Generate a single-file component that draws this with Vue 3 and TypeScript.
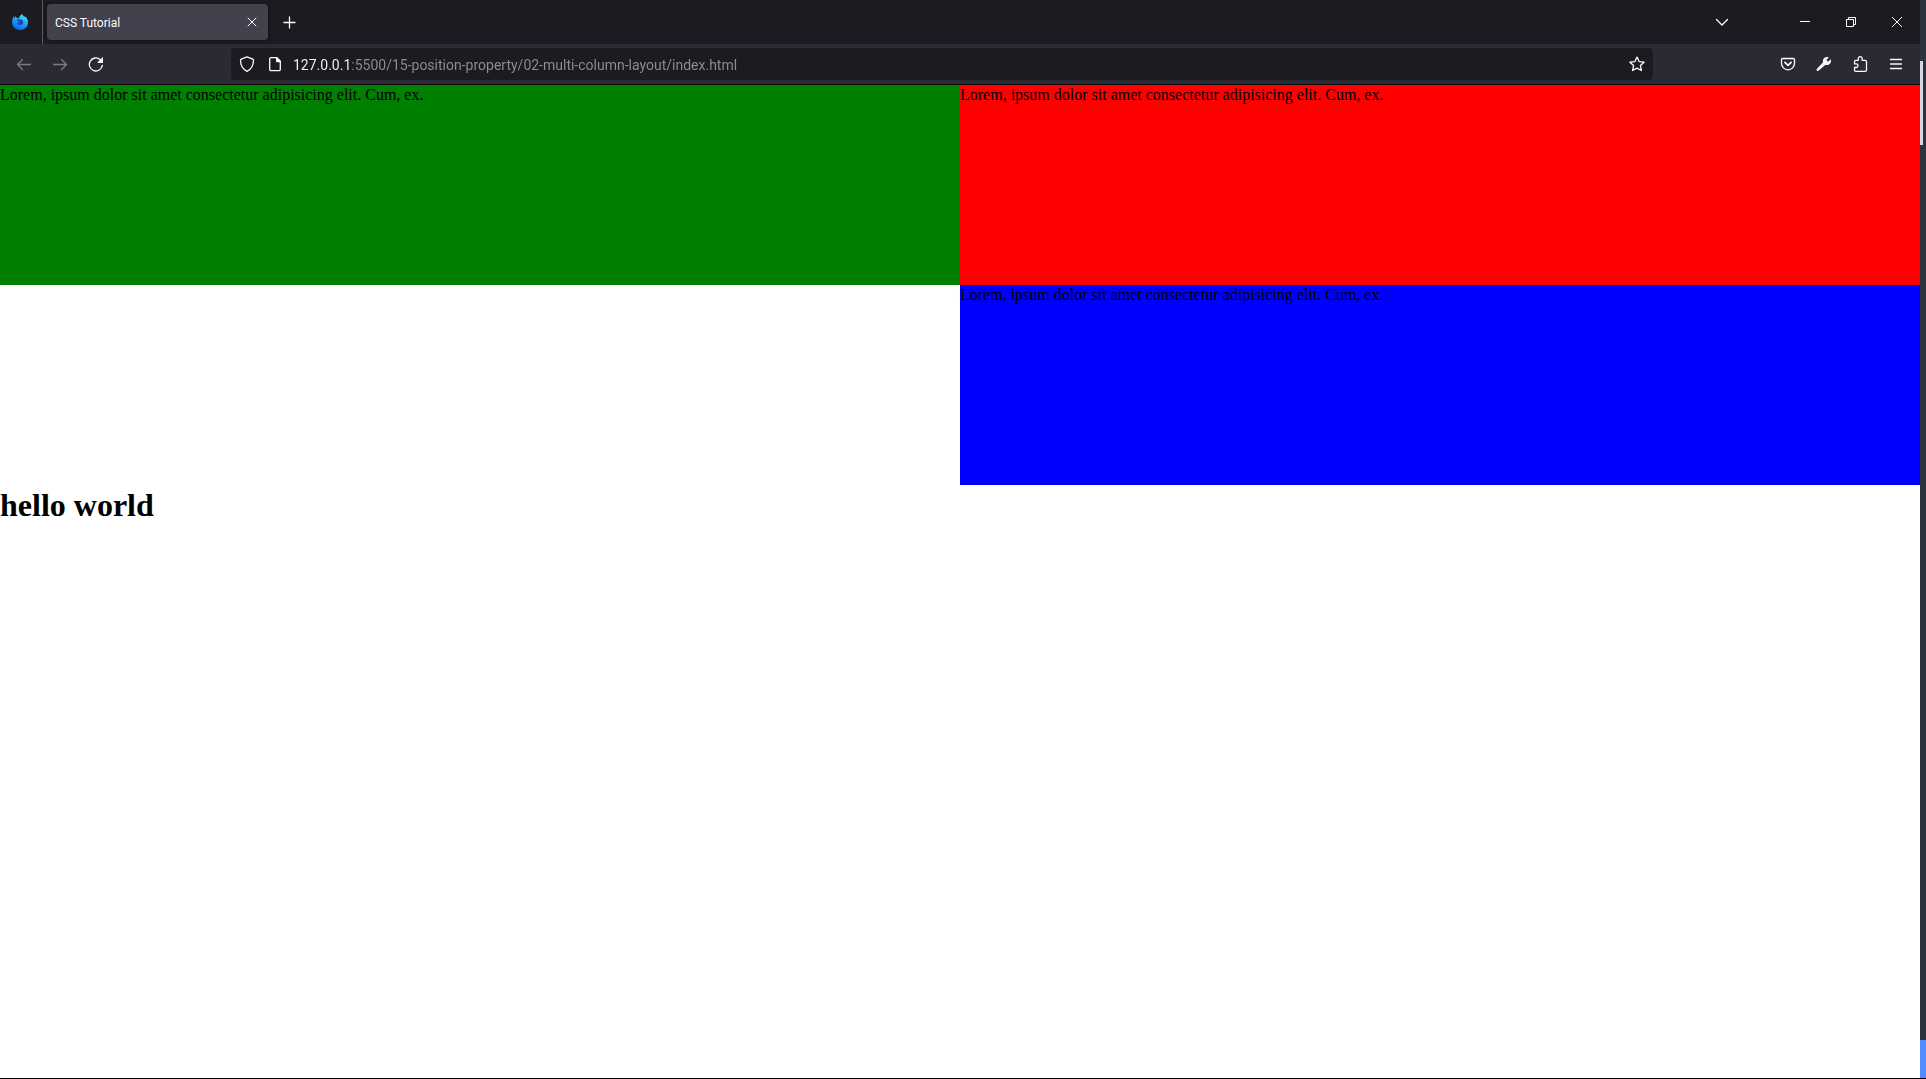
<script setup lang="ts">
import { ref } from 'vue'

const host = '127.0.0.1'
const path = ':5500/15-position-property/02-multi-column-layout/index.html'
const address = ref<string>(host + path)

interface Box {
  name: string
  text: string
}

const lorem = 'Lorem, ipsum dolor sit amet consectetur adipisicing elit. Cum, ex.'
const boxes: Box[] = [
  { name: 'green', text: lorem },
  { name: 'red', text: lorem },
  { name: 'blue', text: lorem },
]
</script>

<template>
  <div class="desktop">
    <div class="window">
      <header class="chrome">
        <div class="title-bar">
          <button class="view-button" type="button" aria-label="Firefox View">
            <svg width="16" height="16" viewBox="0 0 16 16">
              <defs>
                <linearGradient id="flame" x1="0.8" y1="0" x2="0.3" y2="1">
                  <stop offset="0" stop-color="#4ff0f8" />
                  <stop offset="0.45" stop-color="#1ba8f5" />
                  <stop offset="1" stop-color="#0a62ee" />
                </linearGradient>
              </defs>
              <path fill="url(#flame)" d="M10.3 0c.3 1.6 1.300 2.300 2.200 3.200.2-.3.2-.7.1-1.100C14.700 3.600 16 6 16 8.400 16 12.600 12.400 16 8 16S0 12.600 0 8.300C0 6.200.7 4.300 1.700 2l.5 2.300c.3-1 .8-1.600 1.500-2.300.1.900.5 1.500 1 1.900.9-.1 1.700.1 2.300.5C7.300 2.600 8.600.9 10.300 0z" />
              <path fill="#2b3bb8" d="M5 5.500c.8-.3 1.800-.2 2.400.4.7-.5 2-.5 2.700.2 1.200 1 1.500 2.700.6 3.900-1 1.200-2.800 1.400-4 .7C5.700 10.200 5 9.400 5.200 8.600c.6.200 1.500 0 2-.6C6.300 7.700 5.200 6.900 5 5.500z" />
              <path fill="#1674e8" d="M7.200 8c.3-.6.800-.8 1.400-.8-.2.700-.7 1.300-1.400 1.600-.7.300-1.500.2-2-.2.700 0 1.500-.2 2-.6z" />
            </svg>
          </button>
          <div class="tab">
            <span class="tab-title">CSS Tutorial</span>
            <button class="tab-close" type="button" aria-label="Close tab">
              <svg width="10" height="10" viewBox="0 0 10 10"><path class="fine" d="M1 1l8 8M9 1l-8 8" /></svg>
            </button>
          </div>
          <button class="tool" type="button" aria-label="New tab">
            <svg width="14" height="14" viewBox="0 0 14 14"><path class="line" d="M6.500 2v11M1 7.500h11" /></svg>
          </button>
          <div class="window-controls">
            <button class="tool list-tabs" type="button" aria-label="List all tabs">
              <svg width="14" height="14" viewBox="0 0 14 14"><path class="line" d="M1.500 4.500L7 10l5.500-5.500" /></svg>
            </button>
            <button class="control" type="button" aria-label="Minimize">
              <svg width="10" height="10" viewBox="0 0 10 10"><path d="M0 4h10v1H0z" fill="currentColor" /></svg>
            </button>
            <button class="control" type="button" aria-label="Restore">
              <svg width="10" height="10" viewBox="0 0 10 10"><path class="thin" d="M.5 2.500h7v7h-7zM2.500 2.500v-2h7v7h-2" /></svg>
            </button>
            <button class="control" type="button" aria-label="Close">
              <svg width="10" height="10" viewBox="0 0 10 10"><path class="thin" d="M0 0l10 10M10 0L0 10" /></svg>
            </button>
          </div>
        </div>

        <nav class="nav-bar" aria-label="Navigation">
          <button class="tool" type="button" aria-label="Back" disabled>
            <svg width="16" height="16" viewBox="0 0 16 16"><path class="line" d="M14.500 8.500H1.700M6.500 3.500l-5 5 5 5" /></svg>
          </button>
          <button class="tool" type="button" aria-label="Forward" disabled>
            <svg width="16" height="16" viewBox="0 0 16 16"><path class="line" d="M1.500 8.500h12.800M9.500 3.500l5 5-5 5" /></svg>
          </button>
          <button class="tool" type="button" aria-label="Reload">
            <svg width="16" height="16" viewBox="0 0 16 16">
              <path class="line" d="M14.300 9.300A6.500 6.500 0 1 1 12.300 3.700" />
              <path fill="currentColor" d="M15 1.500v5.200c0 .2-.1.300-.3.300H9.600c-.3 0-.4-.3-.2-.5l5.100-5.200c.2-.2.5-.1.500.2z" />
            </svg>
          </button>

          <div class="url-bar">
            <button class="inset" type="button" aria-label="Tracking protection">
              <svg width="16" height="16" viewBox="0 0 16 16"><path class="line" d="M8 .8l5.800 2.300c.4.200.7.500.7 1C14.500 8.500 12.500 13.200 8 15.300 3.500 13.200 1.500 8.500 1.500 4.100c0-.5.300-.8.700-1z" /></svg>
            </button>
            <button class="inset" type="button" aria-label="Site information">
              <svg width="16" height="16" viewBox="0 0 16 16">
                <path class="line" d="M9.500 1.700H4A1.300 1.300 0 0 0 2.700 3v10.300A1.300 1.300 0 0 0 4 14.600h8a1.300 1.300 0 0 0 1.300-1.300V5.500z" />
                <path fill="currentColor" d="M9 1h1l4 4v1.200H9.800L9 5.400z" />
              </svg>
            </button>
            <input v-model="address" class="address" type="text" aria-label="Address" spellcheck="false" />
            <button class="inset" type="button" aria-label="Bookmark this page">
              <svg width="16" height="16" viewBox="0 0 16 16"><path class="line" d="M8 1.100l2.100 4.500 5 .6-3.700 3.400 1 4.900L8 12.100l-4.400 2.400 1-4.900L.9 6.200l5-.6z" /></svg>
            </button>
          </div>

          <button class="tool" type="button" aria-label="Save to Pocket">
            <svg width="16" height="16" viewBox="0 0 16 16">
              <path class="line" d="M2.800 2.500h10.400c.7 0 1.300.5 1.300 1.200v3.600a6.500 6.500 0 0 1-13 0V3.700c0-.7.6-1.200 1.300-1.200z" />
              <path class="bold" d="M4.900 6.400L8 9.400l3.100-3" />
            </svg>
          </button>
          <button class="tool" type="button" aria-label="Developer tools">
            <svg width="16" height="16" viewBox="0 0 16 16"><path fill="currentColor" d="M14.600 3.200l-2.500 2.500-1.800-1.800 2.500-2.500C10.600.3 7.400 1.400 6.900 4.300c-.1.700 0 1.300.2 1.900L1 12.800c-.6.600-.6 1.400-.1 1.900.5.500 1.300.5 1.900-.1l6.700-5.900c.6.200 1.300.3 2 .2 2.900-.5 4.300-3.400 3.100-5.700z" /></svg>
          </button>
          <button class="tool" type="button" aria-label="Extensions">
            <svg width="16" height="16" viewBox="0 0 16 16"><path class="line" d="M2.500 5.500c0-.8.500-1.200 1.200-1.200h2.600V2.600a1.900 1.900 0 0 1 3.800 0v1.700h3.200c.8 0 1.200.5 1.200 1.200v8.600c0 .8-.4 1.200-1.200 1.200H3.700c-.7 0-1.200-.4-1.200-1.200v-2.600h1.700a1.800 1.800 0 0 0 0-3.600H2.500z" /></svg>
          </button>
          <button class="tool" type="button" aria-label="Application menu">
            <svg width="16" height="16" viewBox="0 0 16 16"><path class="line" d="M2.500 3.500h11M2.500 8h11M2.500 12.500h11" /></svg>
          </button>
        </nav>
      </header>

      <main class="page">
        <div class="boxes">
          <div v-for="box in boxes" :key="box.name" class="box" :class="box.name">{{ box.text }}</div>
        </div>
        <h1>hello world</h1>
      </main>
    </div>

    <div class="edge">
      <div class="edge-thumb"></div>
      <div class="edge-accent"></div>
    </div>
  </div>
</template>

<style>
body {
  margin: 0;
}
</style>

<style scoped>
* {
  box-sizing: border-box;
}

.desktop {
  display: flex;
  min-height: 100vh;
  border-bottom: 1px solid #000;
  background: #fff;
}

.window {
  flex: 1;
  min-width: 0;
}

.chrome {
  border-bottom: 1px solid #0c0c0d;
  background: #2b2a33;
  color: #fbfbfe;
  font-family: Roboto, "Open Sans", sans-serif;
}

button {
  display: flex;
  align-items: center;
  justify-content: center;
  flex: none;
  padding: 0;
  border: 0;
  background: none;
  color: inherit;
  font: inherit;
}

button:disabled {
  color: #7c7b82;
}

svg {
  display: block;
}

.line,
.fine,
.thin,
.bold {
  fill: none;
  stroke: currentColor;
  stroke-width: 1.3;
  stroke-linecap: round;
  stroke-linejoin: round;
}

.fine {
  stroke-width: 1;
}

.thin {
  stroke-width: 1;
  stroke-linecap: butt;
  stroke-linejoin: miter;
}

.bold {
  stroke-width: 1.7;
}

.title-bar {
  display: flex;
  align-items: center;
  height: 44px;
  background: #1c1b22;
}

.view-button {
  width: 43px;
  height: 44px;
  padding-right: 2px;
  border-right: 1px solid #5b5a60;
}

.tab {
  display: flex;
  align-items: center;
  width: 221px;
  height: 36px;
  margin: 0 4px;
  padding: 0 4px 0 8px;
  border-radius: 4px;
  background: #42414d;
  box-shadow: 0 0 4px rgba(0, 0, 0, 0.4);
}

.tab-title {
  flex: 1;
  padding-top: 2px;
  font-size: 12px;
  line-height: 16px;
}

.tab-close {
  width: 24px;
  height: 24px;
}

.tool {
  width: 36px;
  height: 36px;
}

.window-controls {
  display: flex;
  align-items: center;
  margin-left: auto;
}

.list-tabs {
  margin-right: 42px;
}

.control {
  width: 46px;
  height: 44px;
}

.nav-bar {
  display: flex;
  align-items: center;
  height: 40px;
  padding: 0 6px;
}

.url-bar {
  display: flex;
  align-items: center;
  flex: 1;
  min-width: 0;
  height: 32px;
  margin: 0 117px;
  padding: 0 2px;
  border-radius: 4px;
  background: #1c1b22;
}

.inset {
  width: 28px;
  height: 28px;
}

.address {
  flex: 1;
  min-width: 0;
  height: 28px;
  margin: 0 0 0 4px;
  padding: 2px 0 0;
  border: 0;
  outline: 0;
  background: linear-gradient(90deg, #fbfbfe 58px, #8f8e94 58px);
  background-clip: text;
  -webkit-background-clip: text;
  color: transparent;
  font: 14px Roboto, "Open Sans", sans-serif;
}

.page {
  color: #000;
  font: 16px/20px "Liberation Serif", "Times New Roman", serif;
}

.boxes {
  display: grid;
  grid-template-columns: 1fr 1fr;
  grid-auto-rows: 200px;
}

.green {
  background: green;
}

.red {
  background: red;
}

.blue {
  grid-column: 2;
  background: blue;
}

h1 {
  margin: 0;
  font-size: 32px;
  line-height: 40px;
}

.edge {
  display: flex;
  flex-direction: column;
  justify-content: space-between;
  width: 6px;
  padding-top: 61px;
  background: #2b333c;
}

.edge-thumb {
  width: 3px;
  height: 84px;
  background: #d6d6de;
}

.edge-accent {
  height: 38px;
  background: #528bff;
}
</style>
